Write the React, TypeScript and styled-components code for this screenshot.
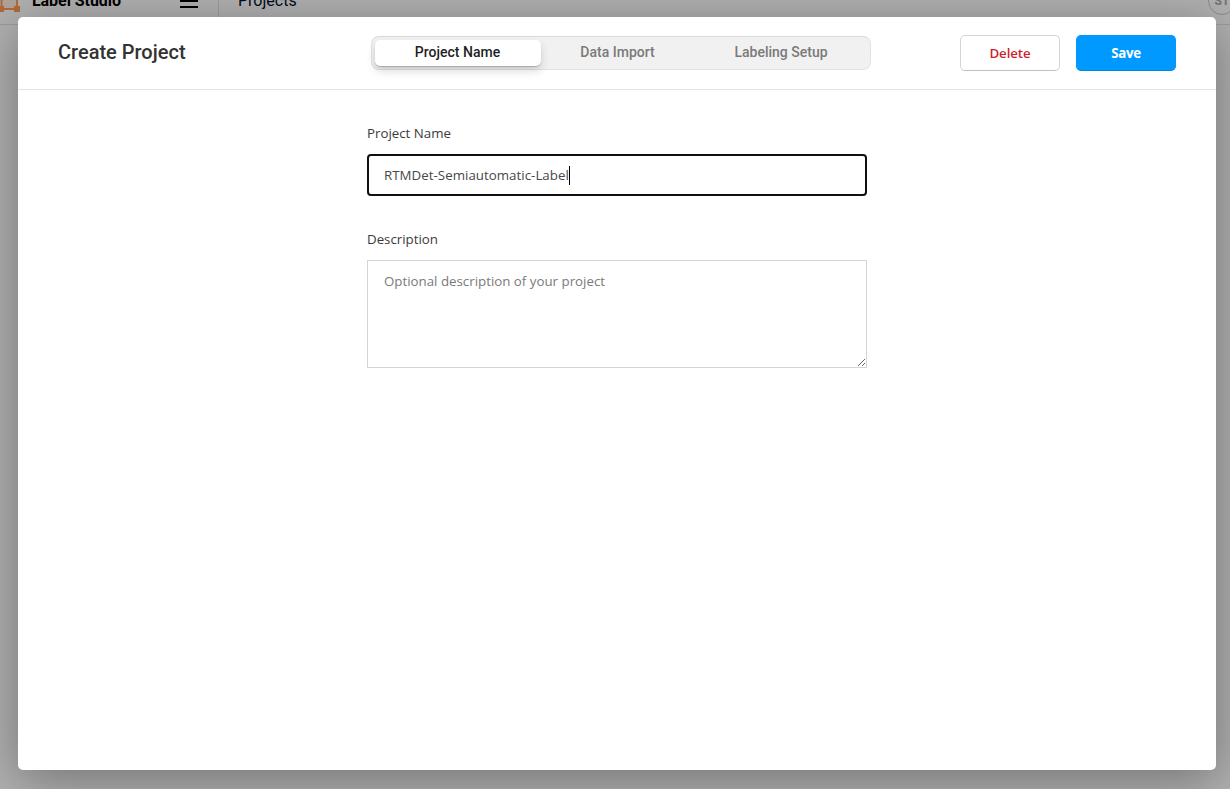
import React from "react";
import styled, { createGlobalStyle, css } from "styled-components";

const GlobalStyle = createGlobalStyle`
  * { box-sizing: border-box; }
  body { margin: 0; overflow: hidden; background: #b0b0b0; }
`;

const ui = `"Open Sans", "Noto Sans", sans-serif`;

const Page = styled.div`
  position: relative;
  height: 789px;
  overflow: hidden;
  background: #b0b0b0;
  font-family: Roboto, sans-serif;
`;

const TopBar = styled.header`
  display: flex;
  align-items: center;
  height: 49px;
  margin-top: -24px;
  padding-top: 2px;
  border-bottom: 1px solid #9c9c9c;
  color: #000;
`;

const Brand = styled.div`
  display: flex;
  align-items: center;
  gap: 12px;
  width: 219px;
  height: 100%;
  padding-right: 20px;
  border-right: 1px solid #9c9c9c;
  font-size: 16px;
  font-weight: 700;
`;

const BrandName = styled.span`
  flex: 1;
  line-height: 20px;
  letter-spacing: -0.05px;
`;

const Crumb = styled.nav`
  flex: 1;
  padding-left: 19px;
  font-size: 16px;
  line-height: 20px;
  color: #000a1c;
`;

const Avatar = styled.div`
  display: flex;
  align-items: center;
  justify-content: center;
  flex: none;
  width: 28px;
  height: 28px;
  margin-right: -6px;
  border: 1px solid #8c8c8c;
  border-radius: 50%;
  font-size: 12px;
  font-weight: 700;
  color: #747474;
`;

const Modal = styled.section`
  position: absolute;
  top: 17px;
  left: 18px;
  width: 1198px;
  height: 753px;
  border-radius: 5px;
  background: #fff;
  box-shadow: 0 10px 50px rgba(0, 0, 0, 0.35);
`;

const ModalHeader = styled.div`
  display: grid;
  grid-template-columns: 313px 500px 1fr;
  align-items: center;
  height: 73px;
  padding: 0 40px;
  border-bottom: 1px solid #e3e3e3;
`;

const Title = styled.h1`
  margin: 0 0 2px;
  font-size: 20px;
  font-weight: 500;
  line-height: 24px;
  color: #333;
`;

const Tabs = styled.div`
  display: grid;
  grid-template-columns: 166px 153px 1fr;
  height: 34px;
  padding: 3px 2px 3px 3px;
  border: 1px solid #e2e2e2;
  border-top-color: #d9d9d9;
  border-radius: 8px;
  background: #f1f1f1;
`;

const Tab = styled.div<{ $active?: boolean }>`
  display: flex;
  align-items: center;
  justify-content: center;
  height: 26px;
  padding-bottom: 2px;
  border-radius: 5px;
  font-size: 14px;
  font-weight: 500;
  color: #7a7a7a;
  ${(p) =>
    p.$active &&
    css`
      padding-right: 1px;
      background: #fff;
      color: #1f1f1f;
      box-shadow: 0 1px 1px rgba(0, 0, 0, 0.2), 0 5px 10px rgba(0, 0, 0, 0.15);
    `}
`;

const Actions = styled.div`
  display: flex;
  justify-content: flex-end;
  gap: 16px;
`;

const Button = styled.button<{ $primary?: boolean }>`
  width: 100px;
  height: 36px;
  padding: 0 0 1px;
  border: 1px solid #d5d5d5;
  border-bottom-color: #bfbfbf;
  border-radius: 5px;
  background: #fff;
  font-family: ${ui};
  font-size: 13.3px;
  font-weight: 600;
  letter-spacing: -0.1px;
  color: #cf1f2e;
  ${(p) =>
    p.$primary &&
    css`
      border-color: #09f #09f #0087e0;
      background: #09f;
      font-weight: 700;
      letter-spacing: -0.3px;
      color: #fff;
    `}
`;

const Form = styled.form`
  display: flex;
  flex-direction: column;
  gap: 32px;
  width: 500px;
  margin: 32px 0 0 349px;
  font-family: ${ui};
  font-size: 13.3px;
`;

const Field = styled.div`
  display: flex;
  flex-direction: column;
`;

const Label = styled.label`
  height: 32px;
  line-height: 23px;
  color: #3a3a3a;
`;

const NameInput = styled.div`
  display: flex;
  align-items: center;
  height: 42px;
  padding: 0 15px;
  border: 2px solid #101010;
  border-radius: 4px;
  letter-spacing: 0.03px;
  color: #484848;
`;

const Caret = styled.span`
  width: 1px;
  height: 19px;
  background: #000;
`;

const DescriptionInput = styled.textarea`
  display: block;
  width: 500px;
  height: 108px;
  padding: 10px 16px;
  border: 1px solid #d5d5d5;
  border-radius: 0;
  outline: none;
  resize: vertical;
  font-family: ${ui};
  font-size: 13.3px;
  line-height: 21px;
  &::placeholder { color: #7a7a7a; }
`;

export default function App() {
  return (
    <>
      <GlobalStyle />
      <Page>
        <TopBar>
          <Brand>
            <svg width="20" height="22" viewBox="0 0 20 22" fill="none">
              <path d="M-2 2.5H17V19H1.5V0" fill="#b1a398" stroke="#b06a3a" strokeWidth="2" />
              <path d="M-2 16H4V22H-2ZM14 16H20V22H14ZM14 0H20V6H14Z" fill="#b06a3a" />
            </svg>
            <BrandName>Label Studio</BrandName>
            <svg width="18" height="14" viewBox="0 0 18 14" fill="#000">
              <path d="M0 0H18V2H0ZM0 6H18V8H0ZM0 12H18V14H0Z" />
            </svg>
          </Brand>
          <Crumb>Projects</Crumb>
          <Avatar>ST</Avatar>
        </TopBar>
        <Modal>
          <ModalHeader>
            <Title>Create Project</Title>
            <Tabs>
              <Tab $active>Project Name</Tab>
              <Tab>Data Import</Tab>
              <Tab>Labeling Setup</Tab>
            </Tabs>
            <Actions>
              <Button>Delete</Button>
              <Button $primary>Save</Button>
            </Actions>
          </ModalHeader>
          <Form>
            <Field>
              <Label>Project Name</Label>
              <NameInput>
                RTMDet-Semiautomatic-Label
                <Caret />
              </NameInput>
            </Field>
            <Field>
              <Label>Description</Label>
              <DescriptionInput placeholder="Optional description of your project" />
            </Field>
          </Form>
        </Modal>
      </Page>
    </>
  );
}
